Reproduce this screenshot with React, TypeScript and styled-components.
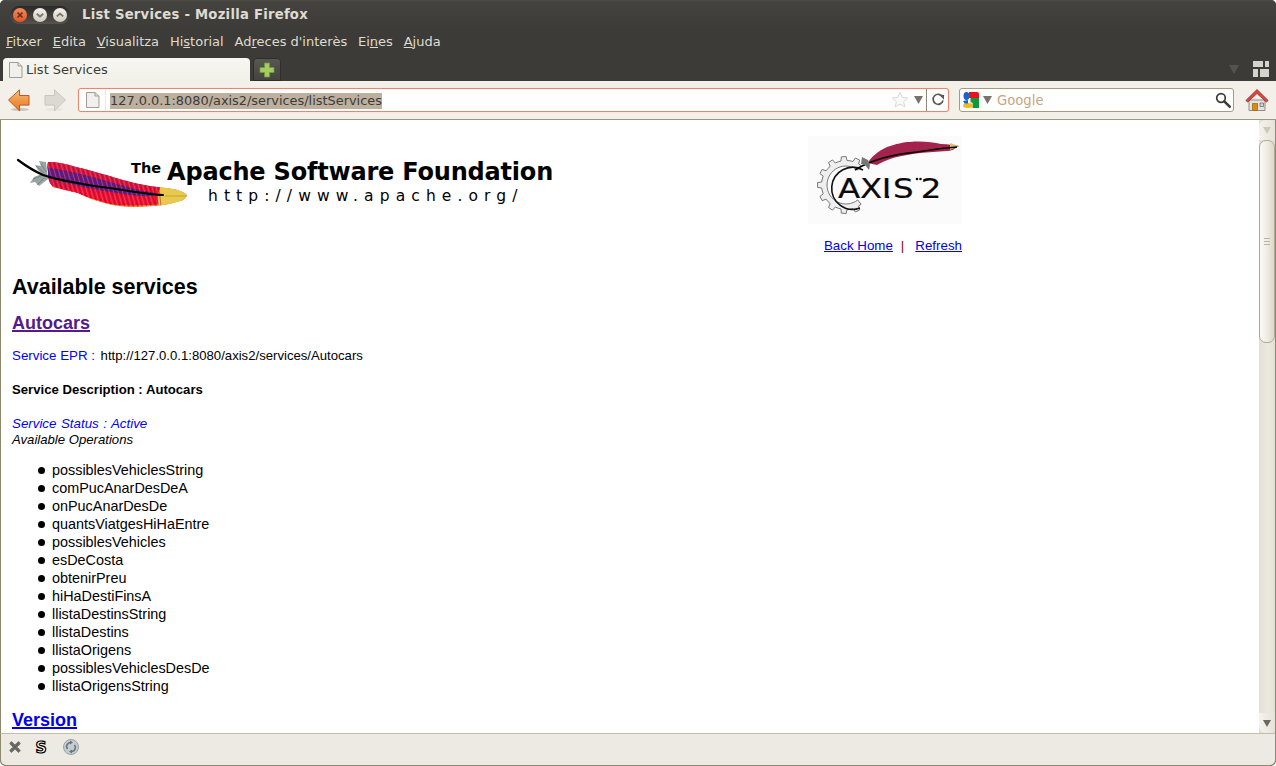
import React from "react";
import styled, { createGlobalStyle } from "styled-components";

const Global = createGlobalStyle`
  html, body { margin: 0; padding: 0; background: #fff; overflow: hidden; }
  #root { width: 1276px; height: 766px; }
`;

const Window = styled.div`
  width: 1276px; height: 766px; display: flex; flex-direction: column; overflow: hidden;
  border-radius: 5px 5px 6px 6px; background: #3c3b37;
  font-family: "DejaVu Sans", sans-serif; font-size: 13px; box-sizing: border-box;
`;
const TitleBar = styled.div`
  height: 30px; flex: none; display: flex; align-items: center; padding: 0 0 2px 10px; box-sizing: border-box;
  background: linear-gradient(#4d4b45 0, #45433f 8%, #3c3b37 100%);
`;
const WindowButtons = styled.div`
  width: 60px; height: 18px; display: flex; align-items: center; justify-content: space-between;
  padding: 0 2px; box-sizing: border-box; border-radius: 9px; margin-top: 1px;
  background: linear-gradient(#2a2926, #55534e);
`;
const TitleText = styled.span`
  margin-left: 12px; font-weight: 700; font-size: 13.2px; letter-spacing: 0.25px; color: #dfdbd2;
`;
const MenuBar = styled.nav`
  height: 26px; flex: none; display: flex; align-items: center; padding: 0 0 4px 6px; gap: 10.85px; color: #dfdbd2;
  box-sizing: border-box;
`;
const MenuItem = styled.span`
  font-size: 13px; u { text-underline-offset: 1px; }
`;
const TabStrip = styled.div`
  height: 25px; flex: none; display: flex; align-items: flex-end; padding: 0 7px 0 3px; gap: 3px; box-sizing: border-box;
`;
const Tab = styled.div`
  width: 247px; height: 23px; display: flex; align-items: center; gap: 2px; padding: 0 5px; box-sizing: border-box;
  background: linear-gradient(#f8f6f1, #f2f0e9); border-radius: 4px 4px 0 0; color: #3c3b37; font-size: 13px;
`;
const NewTab = styled.div`
  width: 28px; height: 23px; display: flex; align-items: center; justify-content: center;
  background: linear-gradient(#5a5852, #44423d); border-radius: 4px 4px 0 0; box-shadow: inset 0 0 0 1px #2f2e2a;
`;
const TabRight = styled.div`
  margin-left: auto; display: flex; align-items: center; gap: 14px; padding-bottom: 4px;
`;
const NavBar = styled.div`
  height: 39px; flex: none; display: flex; align-items: center; padding: 0 7px 1px 7px; box-sizing: border-box;
  background: #f2f0e9; border-bottom: 1px solid #9e9680;
`;
const NavButton = styled.div<{ $gap?: number }>`
  width: 24px; height: 24px; display: flex; align-items: center; justify-content: center; margin-right: ${(p) => p.$gap ?? 0}px;
`;
const UrlBar = styled.div`
  width: 871px; height: 24px; display: flex; align-items: center; box-sizing: border-box; background: #fff;
  border: 1px solid #f0836a; border-radius: 3px; padding-left: 6px; box-shadow: 0 0 1px #f5b8a8;
`;
const UrlIconBox = styled.div`
  width: 20px; height: 22px; display: flex; align-items: center; border-right: 1px solid #eee9df; margin-right: 4px;
`;
const UrlText = styled.span`
  background: #bdb09f; color: #3c3b37; font-size: 12.9px; line-height: 16px; height: 16px; margin-top: 2px; white-space: nowrap;
`;
const UrlActions = styled.div`
  margin-left: auto; display: flex; align-items: center; height: 22px; gap: 5px;
`;
const ReloadBox = styled.div`
  width: 21px; height: 22px; margin-left: -2px; border-left: 1px solid #8f8a7c; display: flex; align-items: center; justify-content: center;
`;
const SearchBar = styled.div`
  width: 275px; height: 24px; margin-left: 10px; display: flex; align-items: center; gap: 4px; box-sizing: border-box; background: #fff;
  border: 1px solid #a89a80; border-radius: 3px; padding: 0 2px 0 3px;
`;
const SearchHint = styled.span`
  color: #c4a77f; font-size: 13.2px; margin: 2px 0 0 1px; flex: 1;
`;
const HomeButton = styled.div`
  width: 24px; height: 24px; margin-left: 11px; display: flex; align-items: center; justify-content: center;
`;

const Body = styled.div`
  flex: 1; min-height: 0; display: flex; background: #fff; border-left: 1px solid #8f8871; border-right: 1px solid #8f8871;
`;
const Page = styled.main`
  flex: 1; min-width: 0; overflow: hidden; padding: 16px 0 0 11px; color: #000; font-family: "Liberation Sans", Arial, sans-serif; font-size: 13.15px; line-height: 16px;
`;
const Header = styled.header`
  display: grid; grid-template-columns: 796px 154px; height: 117px;
`;
const ApacheLogo = styled.div`
  display: grid; height: 64px; margin-top: 14px; margin-left: -2px;
  & > * { grid-area: 1 / 1; }
`;
const LogoTextBlock = styled.div`
  padding: 4px 0 0 121px; color: #000; font-family: "DejaVu Sans", sans-serif; white-space: nowrap;
`;
const LogoLine = styled.div`
  display: flex; align-items: baseline; height: 34px; line-height: 36px; gap: 6px;
`;
const LogoThe = styled.span`
  font-size: 14.5px; font-weight: 700; position: relative; top: -7px;
`;
const LogoName = styled.span`
  font-size: 24px; font-weight: 700; letter-spacing: -0.2px;
`;
const LogoUrl = styled.div`
  font-size: 15.5px; line-height: 16px; letter-spacing: 6.1px; margin-left: 77px;
`;
const AxisColumn = styled.div`
  display: flex; flex-direction: column; align-items: flex-end;
`;
const HeaderLinks = styled.div`
  margin-top: 14px; white-space: nowrap; height: 16px; font-size: 13.33px;
`;
const Link = styled.a`
  color: #0000ee; text-decoration: underline; cursor: pointer;
`;
const Separator = styled.span`
  color: #8b0000; margin: 0 11px 0 8px;
`;
const Heading = styled.h2`
  margin: 22px 0 0; font-size: 21.5px; line-height: 24px; font-weight: 700;
`;
const ServiceName = styled.h3<{ $gap: number }>`
  margin: ${(p) => p.$gap}px 0 0; font-size: 18px; line-height: 22px; font-weight: 700;
  a { text-decoration-thickness: 2px; }
`;
const VisitedLink = styled(Link)`
  color: #551a8b;
`;
const Row = styled.div<{ $gap?: number }>`
  margin-top: ${(p) => p.$gap ?? 0}px; height: 16px;
`;
const Blue = styled.span`
  color: #0000ff; font-size: 13.33px; margin-right: 2px;
`;
const BlueItalic = styled.em`
  color: #0000ff; font-size: 13.33px; word-spacing: 0.8px;
`;
const Strong = styled.b`
  font-weight: 700;
`;
const Ops = styled.ul`
  margin: 13px 0 0; padding: 0 0 0 40px; font-size: 14.4px; line-height: 18px; list-style: none;
  li::before {
    content: ""; display: inline-block; width: 7px; height: 7px; border-radius: 50%; background: #000;
    margin: 0 7px 1px -14px; vertical-align: middle;
  }
`;
const Scrollbar = styled.div`
  width: 16px; flex: none; display: flex; flex-direction: column; background: linear-gradient(90deg, #e3dfd4, #ece9e0 60%, #e3dfd4);
`;
const ScrollArrow = styled.div<{ $down?: boolean }>`
  height: 20px; flex: none; display: flex; align-items: center; justify-content: center;
  border-radius: ${(p) => (p.$down ? "0 0 7px 7px" : "7px 7px 0 0")};
  background: linear-gradient(90deg, #f5f3ee, #e6e2d8);
  margin-top: ${(p) => (p.$down ? "auto" : "0")};
`;
const ScrollThumb = styled.div`
  height: 203px; flex: none; box-sizing: border-box; display: flex; flex-direction: column; align-items: center; justify-content: center; gap: 2px;
  border: 1px solid #b2a88f; border-radius: 7px; background: linear-gradient(90deg, #fbfaf7, #efece5 50%, #ddd8cb); padding-bottom: 1px;
`;
const Grip = styled.i`
  display: block; width: 6px; height: 1px; background: #bcb4a0;
`;
const StatusBar = styled.footer`
  height: 33px; flex: none; display: flex; align-items: center; padding: 0 0 5px 6px; box-sizing: border-box;
  background: #edeae3; border-top: 1px solid #c4bdac; border-left: 1px solid #8f8871; border-right: 1px solid #8f8871; border-bottom: 1px solid #8f8871; border-radius: 0 0 6px 6px;
`;
const StatusSlot = styled.span<{ $gap: number }>`
  display: flex; margin-right: ${(p) => p.$gap}px;
`;

const CapIcon = ({ kind }: { kind: "close" | "min" | "max" }) => (
  <svg width="16" height="16" viewBox="0 0 16 16">
    <defs>
      <linearGradient id="capO" x1="0" y1="0" x2="0" y2="1"><stop offset="0" stopColor="#f58a5a" /><stop offset="1" stopColor="#e8541f" /></linearGradient>
      <linearGradient id="capW" x1="0" y1="0" x2="0" y2="1"><stop offset="0" stopColor="#f4f2ec" /><stop offset="1" stopColor="#cfcbc0" /></linearGradient>
    </defs>
    <circle cx="8" cy="8" r="7" fill={kind === "close" ? "url(#capO)" : "url(#capW)"} />
    {kind === "close" && <path d="M5.5 5.5l5 5M10.5 5.5l-5 5" stroke="#5a3526" strokeWidth="1.7" />}
    {kind === "min" && <path d="M4.8 6.8L8 9.6l3.2-2.8" stroke="#77736a" strokeWidth="1.8" fill="none" />}
    {kind === "max" && <path d="M4.8 9.4L8 6.6l3.2 2.8" stroke="#77736a" strokeWidth="1.8" fill="none" />}
  </svg>
);

const PageIcon = ({ size = 16 }: { size?: number }) => (
  <svg width={size} height={size} viewBox="0 0 16 16">
    <path d="M1.5.5h8.500l4 3.500v11.500h-12.500z" fill="#f1f0ec" stroke="#9f9d97" />
    <path d="M10 .5v3.500h4" fill="#e0dfda" stroke="#9f9d97" />
  </svg>
);

const ArrowIcon = ({ back }: { back?: boolean }) => (
  <svg width="24" height="24" viewBox="0 0 24 24" style={back ? undefined : { transform: "scaleX(-1)" }}>
    <defs>
      <linearGradient id="arrO" x1="0" y1="0" x2="0" y2="1"><stop offset="0" stopColor="#f7c27e" /><stop offset="0.55" stopColor="#ee9440" /><stop offset="1" stopColor="#e57a28" /></linearGradient>
    </defs>
    <ellipse cx="13" cy="21.5" rx="9" ry="1.5" fill={back ? "#c9c3b5" : "#e8e5dd"} />
    <path
      d="M1.5 12L12.5 1.8v5.7h9.5v9.6h-9.5v5.7z"
      fill={back ? "url(#arrO)" : "#dcd9d2"}
      stroke={back ? "#c9502a" : "#c9c6bf"}
      strokeWidth="1"
      strokeLinejoin="round"
    />
  </svg>
);

const Triangle = ({ color = "#77736a", size = 9 }: { color?: string; size?: number }) => (
  <svg width={size} height={size} viewBox="0 0 9 9"><path d="M0 1h9L4.5 9z" fill={color} /></svg>
);

const GoogleIcon = () => (
  <svg width="16" height="16" viewBox="0 0 16 16">
    <path d="M6 0h8a2 2 0 0 1 2 2v4H6z" fill="#e8141c" />
    <path d="M7.5 6H16v10H9.500V10.500H7.500z" fill="#0f9a3a" />
    <ellipse cx="3.500" cy="4" rx="3" ry="4" fill="#1b63c8" />
    <ellipse cx="5" cy="13.500" rx="5" ry="2.500" fill="#f5b81c" />
    <path d="M0 9l5-1v3.500H1.500z" fill="#1b63c8" />
  </svg>
);

const FEATHER_BARBS = Array.from({ length: 48 }, (_, i) => i);
const FEATHER_BODY = "M38 12C48 12 58 14 66 17C84 21 102 27 117 31C132 35 146 37 157 38C166 39 173 41 177 45C176 49 172 51 167 52C158 55 146 56 127 57C116 57 106 56 98 54C86 51 76 47 67 43C58 41 50 39 43 37C39 32 37 28 38 23C37 19 37 15 38 12z";

const ApacheFeather = () => (
  <svg width="190" height="64" viewBox="0 0 190 64">
    <defs>
      <clipPath id="fClip"><path d={FEATHER_BODY} /></clipPath>
    </defs>
    <path d="M36 12L29 11 31 16 25 15 28 20 32 24 24 27 20 33 25 32 29 36 38 29z" fill="#98a3a3" />
    <path d="M31 14l5 8M26 16l8 7M23 29l10-4M27 35l7-7" stroke="#6c7676" strokeWidth=".7" />
    <g clipPath="url(#fClip)">
      <path d={FEATHER_BODY} fill="#ee1236" />
      <path d="M36 10H110L150 38H40z" fill="#d81544" />
      <path d="M38 18C60 20 90 29 118 37C128 40 136 41 146 43L140 47C104 44 70 37 38 28z" fill="#5c1f8c" />
      <path d="M40 35C56 42 76 46 96 53C112 57 132 56 152 54L160 60H40z" fill="#f7a01e" />
      <path d="M60 38C76 46 92 50 108 52C122 54 138 53 150 51L152 46H100z" fill="#f0163a" />
      <path d="M152 34H182V60H150C147 52 147 42 152 34z" fill="#e9c94c" />
      <path d="M155 46C162 46 170 46 177 46" stroke="#a88c2c" strokeWidth=".6" />
      {FEATHER_BARBS.map((i) => {
        const x = 36 + i * 2.4;
        const y = 8 + i * 0.62;
        return (
          <path
            key={i}
            d={`M${x} ${y}l${i > 44 ? 4 : 10} 34`}
            stroke={i % 2 ? "#8e0c34" : "#ff6a5a"}
            strokeWidth=".7"
            opacity=".7"
          />
        );
      })}
    </g>
    <path d="M8 10C16 16 24 21 33 25C44 29 56 31 67 33C78 35 90 37 100 38C112 40 124 42 133 43C140 44 147 45 153 45" fill="none" stroke="#000" strokeWidth="2.200" strokeLinecap="round" />
  </svg>
);

const gearPoints = () => {
  const cx = 38, cy = 49, pts: string[] = [];
  const teeth = 9;
  const start = 52, span = 256;
  for (let i = 0; i < teeth; i++) {
    const a = start + (span * i) / teeth;
    const st = span / teeth;
    const seg: [number, number][] = [[a, 24.5], [a + st * 0.25, 24.5], [a + st * 0.33, 28.5], [a + st * 0.67, 28.5], [a + st * 0.75, 24.5], [a + st, 24.5]];
    seg.forEach(([d, r]) => {
      const t = (d * Math.PI) / 180;
      pts.push(`${(cx + r * Math.cos(t)).toFixed(1)},${(cy + r * Math.sin(t)).toFixed(1)}`);
    });
  }
  for (let d = start + span; d >= start; d -= 8) {
    const t = (d * Math.PI) / 180;
    pts.push(`${(cx + 19 * Math.cos(t)).toFixed(1)},${(cy + 19 * Math.sin(t)).toFixed(1)}`);
  }
  return pts.join(" ");
};

const AxisLogo = () => (
  <svg width="154" height="88" viewBox="0 0 154 88" style={{ display: "block", background: "#fbfbfb" }}>
    <polygon points={gearPoints()} fill="#efefef" stroke="#777" strokeWidth="1" />
    <path d="M55 34A21 21 0 1 0 52 72" fill="none" stroke="#111" strokeWidth="1.600" />
    <path d="M60 27C62 22 70 15 79 11C88 8 96 6 102 6C112 5 125 6 133 8C140 8 146 9 151 10C147 13 143 15 139 15C130 16 120 16 112 17C102 18 93 20 85 22C78 24 73 27 69 29z" fill="#a3224e" />
    <path d="M142 7L151 10 142 14z" fill="#d9c27a" />
    <path d="M47 34C56 28 65 25 75 22C86 19 98 17 109 16C122 14 136 12 149 11" fill="none" stroke="#000" strokeWidth="1.600" />
    <path d="M54 21l6 3 2 5-1 5-4-5-4-1z" fill="#777" />
    <text x="25 43.300 61.500 70.800 94" y="62" transform="scale(1.2 1)" fontFamily="'DejaVu Sans', sans-serif" fontSize="27" fill="#0a0a0a" stroke="#0a0a0a" strokeWidth=".2">AXIS2</text>
    <circle cx="109" cy="43" r="1.300" fill="#111" />
    <circle cx="112.500" cy="43" r="1.300" fill="#111" />
    <circle cx="80" cy="61" r="1.300" fill="#111" />
  </svg>
);

const Plus = () => (
  <svg width="16" height="16" viewBox="0 0 16 16">
    <path d="M5.500 1h5v4.500H15v5h-4.500V15h-5v-4.500H1v-5h4.500z" fill="#a3cc62" stroke="#6f9a3c" strokeWidth=".8" />
  </svg>
);

const Tiles = () => (
  <svg width="16" height="16" viewBox="0 0 16 16">
    <path d="M0 0h10v6H0zM12 0h4v6h-4zM0 8h5v8H0zM7 8h9v8H7z" fill="#d6d3cb" />
  </svg>
);

const Star = () => (
  <svg width="18" height="18" viewBox="0 0 18 18">
    <path d="M9 1.500l2.300 5 5.300.5-4 3.600 1.200 5.300L9 13.100l-4.800 2.800 1.200-5.300-4-3.600 5.300-.5z" fill="#fafafa" stroke="#dad8d2" strokeWidth="1" />
  </svg>
);

const Reload = () => (
  <svg width="14" height="14" viewBox="0 0 14 14">
    <path d="M11.500 3.800A5 5 0 1 0 12 7.500" fill="none" stroke="#5a5852" strokeWidth="1.700" />
    <path d="M8.500 1.200l4.800 .2-.2 4.800z" fill="#5a5852" transform="translate(-.2 .6)" />
  </svg>
);

const Magnifier = () => (
  <svg width="16" height="16" viewBox="0 0 16 16">
    <circle cx="6" cy="6" r="4.300" fill="#fff" stroke="#3c3b37" strokeWidth="1.700" />
    <path d="M9.300 9.300l5.400 5.400" stroke="#3c3b37" strokeWidth="2.600" strokeLinecap="round" />
  </svg>
);

const Home = () => (
  <svg width="24" height="24" viewBox="0 0 24 24">
    <path d="M4 12h16v10.500H4z" fill="#e4e2dc" stroke="#8f8d86" />
    <path d="M7.500 15.500h5v7h-5z" fill="#d98a12" stroke="#a8680c" strokeWidth=".8" />
    <path d="M15 15h3.500v3.500H15z" fill="#cfd3d6" stroke="#6f7275" strokeWidth=".8" />
    <path d="M.8 12.500L12 1.500l11.200 11-2 1.500L12 5.500 2.800 14z" fill="#cf4a44" stroke="#a82f2a" strokeWidth=".8" />
  </svg>
);

const StopIcon = () => (
  <svg width="16" height="16" viewBox="0 0 16 16">
    <path d="M3 4.500l1.500-1.500L8 6.500 11.500 3 13 4.500 9.500 8l3.500 3.500-1.500 1.500L8 9.500 4.500 13 3 11.500 6.500 8z" fill="#5f5e5a" stroke="#6e6d68" strokeWidth="1.200" strokeLinejoin="round" />
  </svg>
);

const SIcon = () => (
  <svg width="16" height="16" viewBox="0 0 16 16">
    <text x="8" y="13.500" textAnchor="middle" fontFamily="'DejaVu Sans', sans-serif" fontWeight="700" fontSize="15.500" fill="#fff" stroke="#000" strokeWidth="1.200">S</text>
  </svg>
);

const SyncIcon = () => (
  <svg width="18" height="18" viewBox="0 0 18 18">
    <circle cx="9" cy="9" r="7.500" fill="#c3ccd0" stroke="#98a3a8" />
    <path d="M5.500 11A4 4 0 0 1 9 4.500M12.500 7A4 4 0 0 1 9 13.500" fill="none" stroke="#6a7478" strokeWidth="1.600" />
    <path d="M8 2.500l3 2-3 2zM10 11.500l-3 2 3 2z" fill="#6a7478" />
  </svg>
);

const MENU: [string, string, string][] = [
  ["", "F", "itxer"],
  ["", "E", "dita"],
  ["", "V", "isualitza"],
  ["Hi", "s", "torial"],
  ["Ad", "r", "eces d'interès"],
  ["Ei", "n", "es"],
  ["", "A", "juda"],
];

const OPERATIONS = [
  "possiblesVehiclesString", "comPucAnarDesDeA", "onPucAnarDesDe", "quantsViatgesHiHaEntre", "possiblesVehicles", "esDeCosta",
  "obtenirPreu", "hiHaDestiFinsA", "llistaDestinsString", "llistaDestins", "llistaOrigens", "possiblesVehiclesDesDe", "llistaOrigensString",
];

export default function App() {
  return (
    <Window>
      <Global />
      <TitleBar>
        <WindowButtons>
          <CapIcon kind="close" /><CapIcon kind="min" /><CapIcon kind="max" />
        </WindowButtons>
        <TitleText>List Services - Mozilla Firefox</TitleText>
      </TitleBar>
      <MenuBar>
        {MENU.map(([a, u, b]) => (
          <MenuItem key={u + b}>{a}<u>{u}</u>{b}</MenuItem>
        ))}
      </MenuBar>
      <TabStrip>
        <Tab><PageIcon />List Services</Tab>
        <NewTab><Plus /></NewTab>
        <TabRight><Triangle color="#55534e" size={10} /><Tiles /></TabRight>
      </TabStrip>
      <NavBar>
        <NavButton $gap={12}><ArrowIcon back /></NavButton>
        <NavButton $gap={11}><ArrowIcon /></NavButton>
        <UrlBar>
          <UrlIconBox><PageIcon /></UrlIconBox>
          <UrlText>127.0.0.1:8080/axis2/services/listServices</UrlText>
          <UrlActions>
            <Star />
            <Triangle />
            <ReloadBox><Reload /></ReloadBox>
          </UrlActions>
        </UrlBar>
        <SearchBar>
          <GoogleIcon />
          <Triangle />
          <SearchHint>Google</SearchHint>
          <Magnifier />
        </SearchBar>
        <HomeButton><Home /></HomeButton>
      </NavBar>
      <Body>
        <Page>
          <Header>
            <ApacheLogo>
              <ApacheFeather />
              <LogoTextBlock>
                <LogoLine>
                  <LogoThe>The</LogoThe>
                  <LogoName>Apache Software Foundation</LogoName>
                </LogoLine>
                <LogoUrl>http://www.apache.org/</LogoUrl>
              </LogoTextBlock>
            </ApacheLogo>
            <AxisColumn>
              <AxisLogo />
              <HeaderLinks>
                <Link>Back Home</Link>
                <Separator>|</Separator>
                <Link>Refresh</Link>
              </HeaderLinks>
            </AxisColumn>
          </Header>
          <Heading>Available services</Heading>
          <ServiceName $gap={13}><VisitedLink>Autocars</VisitedLink></ServiceName>
          <Row $gap={14}><Blue>Service EPR :</Blue> http://127.0.0.1:8080/axis2/services/Autocars</Row>
          <Row $gap={18}><Strong>Service Description : Autocars</Strong></Row>
          <Row $gap={18}><BlueItalic>Service Status : Active</BlueItalic></Row>
          <Row><em>Available Operations</em></Row>
          <Ops>
            {OPERATIONS.map((op) => <li key={op}>{op}</li>)}
          </Ops>
          <ServiceName $gap={14}><Link>Version</Link></ServiceName>
        </Page>
        <Scrollbar>
          <ScrollArrow><Triangle color="#cfc8b8" size={8} /></ScrollArrow>
          <ScrollThumb><Grip /><Grip /><Grip /></ScrollThumb>
          <ScrollArrow $down><Triangle color="#6a6860" size={8} /></ScrollArrow>
        </Scrollbar>
      </Body>
      <StatusBar>
        <StatusSlot $gap={10}><StopIcon /></StatusSlot>
        <StatusSlot $gap={13}><SIcon /></StatusSlot>
        <StatusSlot $gap={0}><SyncIcon /></StatusSlot>
      </StatusBar>
    </Window>
  );
}
